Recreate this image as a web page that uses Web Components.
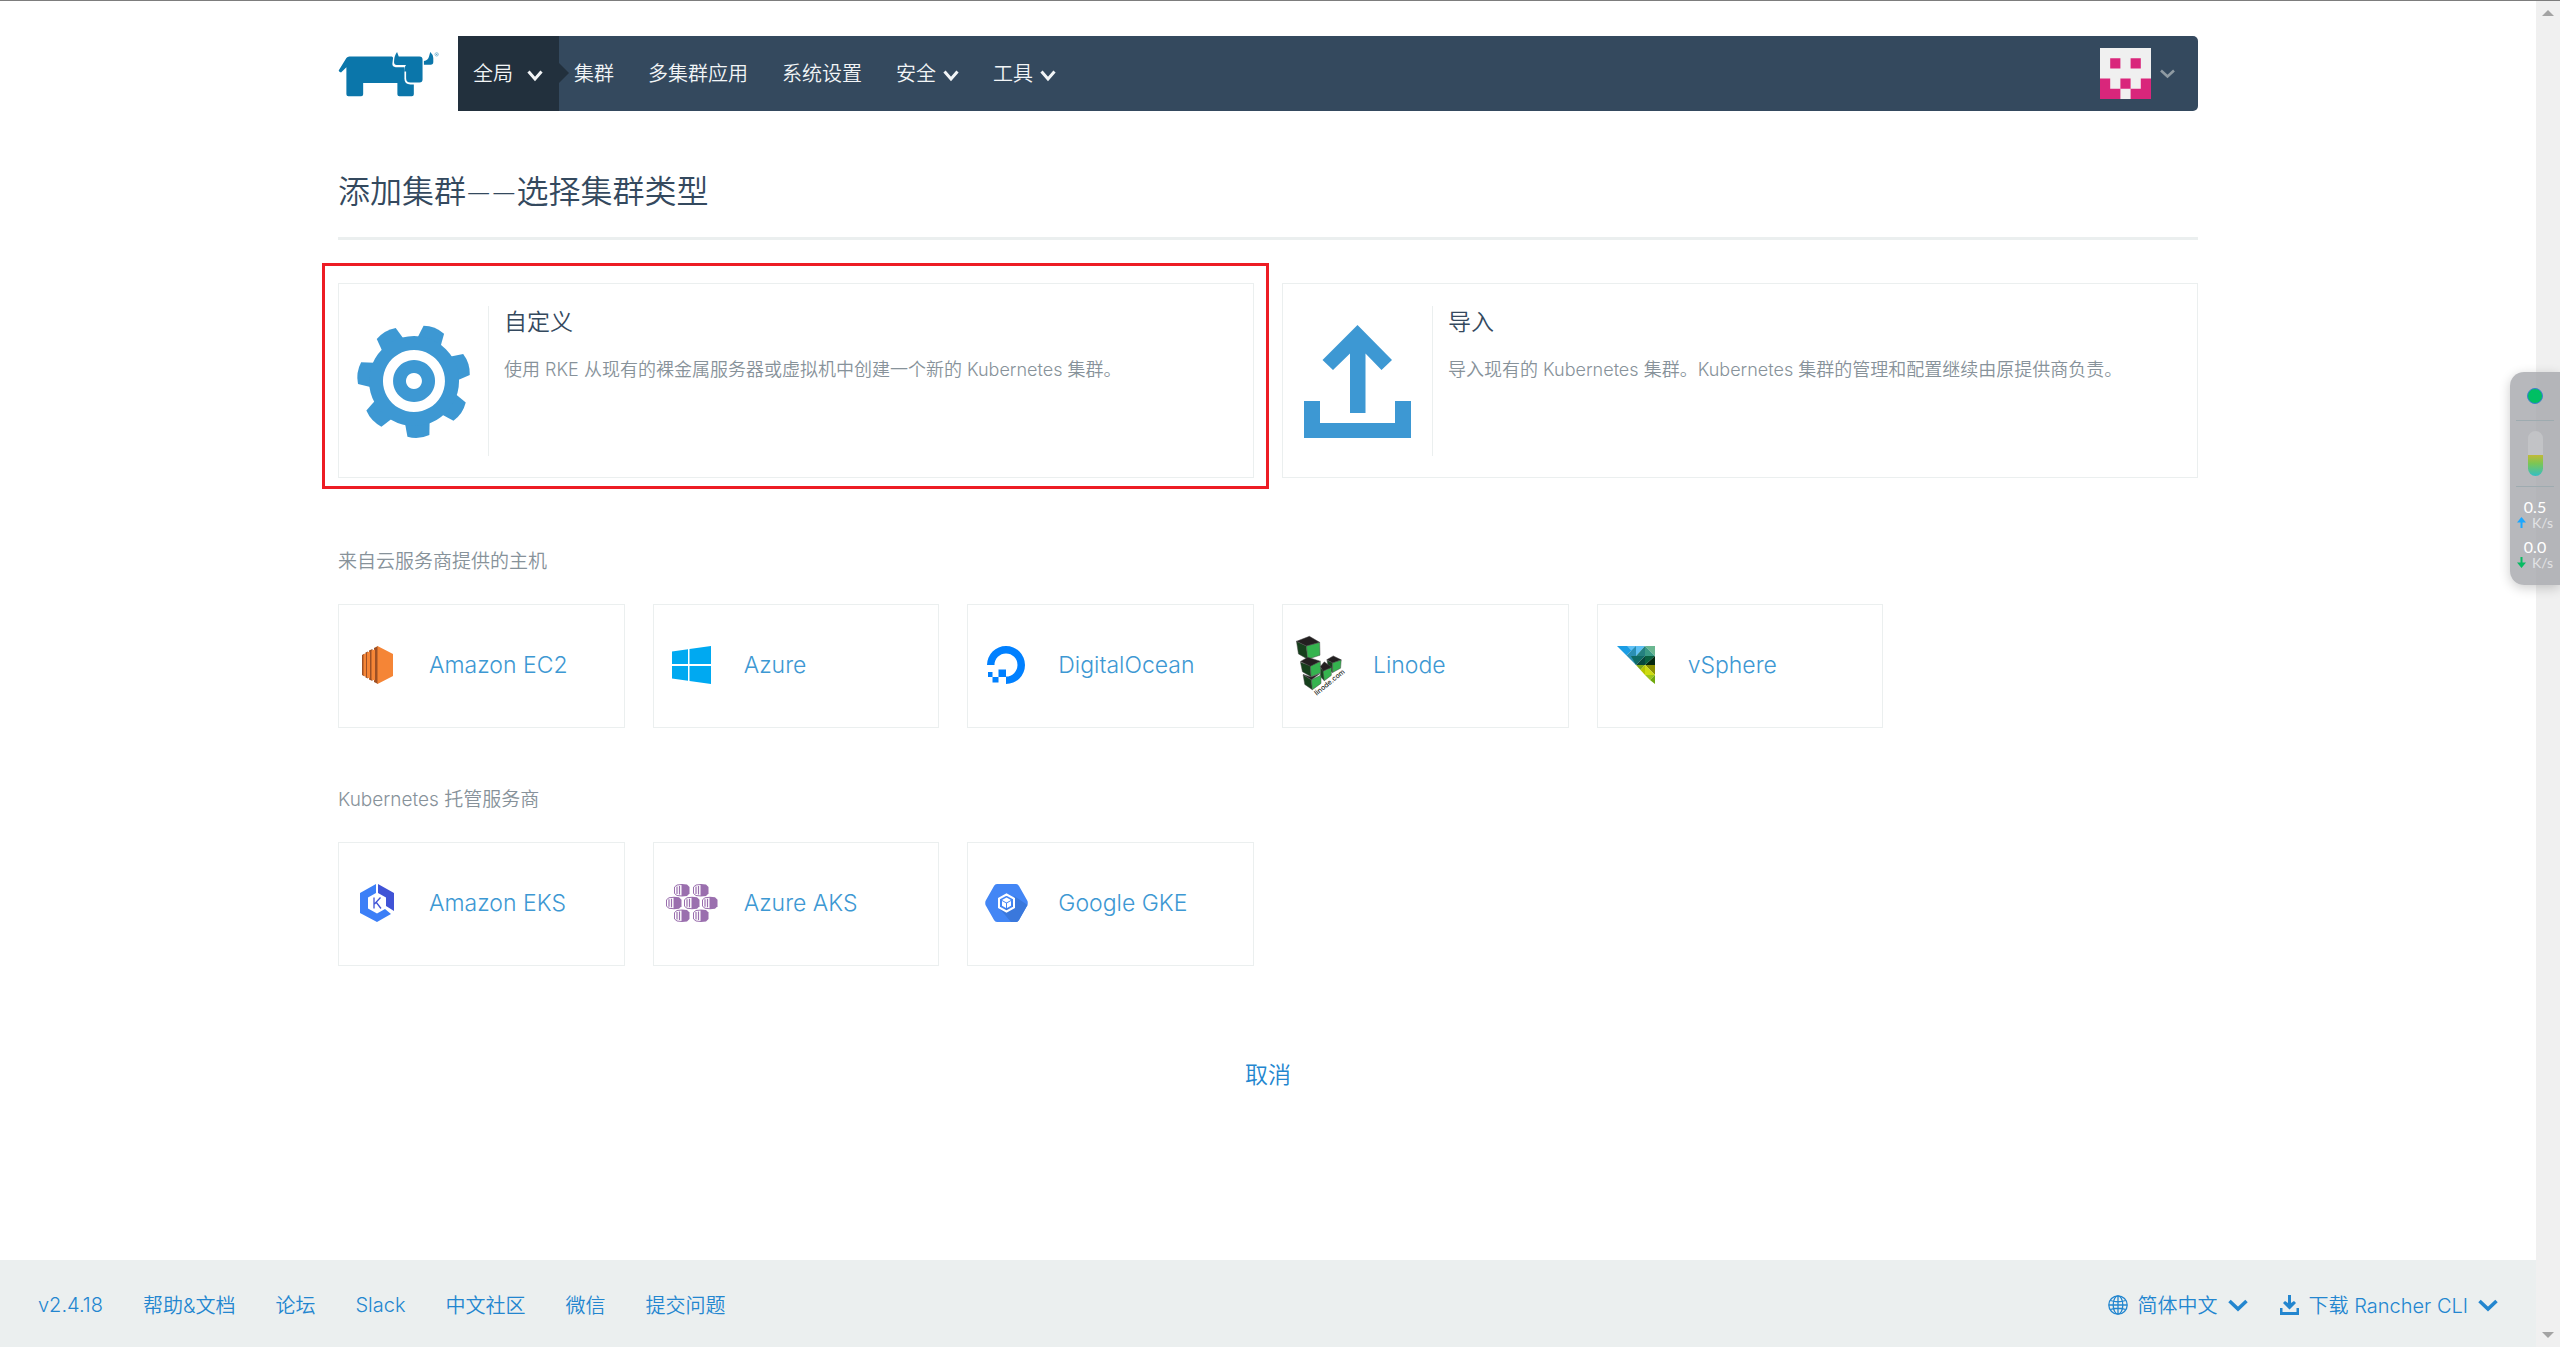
<!DOCTYPE html>
<html lang="zh-CN">
<head>
<meta charset="utf-8">
<title>Rancher</title>
<style>
  :root {
    --primary: #2386cf;
    --link: #3d98d3;
    --dark: #34495e;
    --darker: #22303d;
    --muted: #87929a;
    --line: #ebefef;
  }
  html, body {
    height: 100%;
    margin: 0;
  }
  body {
    background: #fff;
    color: var(--dark);
    font-family: Inter, "Noto Sans CJK SC", sans-serif;
    font-size: 20px;
    font-weight: 350;
  }
</style>
</head>
<body>
<rc-app></rc-app>
<script>
const teeth = [...Array(7).keys()].map(i => `<path transform="rotate(${(-4.6 + i * 360 / 7).toFixed(2)} 57 57)" d="M44 92 L46 112 Q57 116 68 112 L70 92Z"/>`).join('')

const aksCell = (x, y) => `
  <g transform="translate(${x} ${y})">
    <path fill="#9a6fae" d="M8 0 L13 .5 L15.500 3 V9.500 L13 12 L8 12.500Z"/>
    <path fill="#fff" stroke="#9a6fae" stroke-width="1" d="M8 .5 L3 1 L.5 3 V9.500 L3 11.500 L8 12Z"/>
    <path stroke="#9a6fae" stroke-width="1.200" d="M3 2.500 V10 M5.500 2 V10.500"/>
  </g>`

// name: [width, height, viewBox, markup]
const icons = {
  logo: [102, 47, '14 18 304 140', `
    <g fill="#0b76aa">
      <path d="M16 79 L39 42 Q42 37 48 37 H174 Q178 37 178 42 L176 60 Q176 69 186 69 H212 V104 Q212 121 230 121 H240 V150 Q240 156 234 156 H197 Q191 156 191 150 V116 H89 V150 Q89 156 83 156 H45 Q39 156 39 150 V69 L23 85 Q17 84 16 79Z"/>
      <path d="M190 24 L195 37 H257 Q266 37 266 46 V106 Q266 115 257 115 H230 Q217 115 217 102 V82 H211 Q213 66 217 63 H189 Q181 63 181 54 Q181 36 190 24Z"/>
      <path d="M289 24 Q298 32 298 42 V54 Q298 62 290 62 H270 V51 Q283 48 285 38Z"/>
    </g>
    <circle cx="308" cy="31" r="5" fill="none" stroke="#5aa3c7" stroke-width="2"/><circle cx="308" cy="31" r="2" fill="#5aa3c7"/>`],
  gear: [114, 114, '0 0 114 114', `
    <g fill="#3d98d3">${teeth}<path fill-rule="evenodd" d="M57 12 a45 45 0 1 0 .1 0Z M57 26 a31 31 0 1 1 -.1 0Z"/>
    <path fill-rule="evenodd" d="M57 36 a21 21 0 1 0 .1 0Z M57 49 a8 8 0 1 1 -.1 0Z"/></g>`],
  upload: [107, 113, '0 0 107 113', `
    <path fill="#3d98d3" d="M53.500 0 L88 35 L77.500 45 L61.500 28.500 V88 H46 V28.500 L29 45 L18.500 35Z M0 76 H16 V98 H91 V76 H107 V113 H0Z"/>`],
  avatar: [51, 51, '0 0 5 5', `
    <path fill="#f0f0f0" d="M0 0h5v5H0z"/>
    <path fill="#d9267b" d="M1 1h1v1H1z M3 1h1v1H3z M0 3h1v1h1v1H0z M2 3h1v1H2z M4 3h1v2H3v-1h1z"/>`],
  chevron: [20, 12, '0 0 20 12', `<path fill="none" stroke="currentColor" stroke-width="3.600" d="M1.500 2 L10 10 L18.500 2"/>`],
  caret: [16, 12, '0 0 16 12', `<path fill="none" stroke="currentColor" stroke-width="3" d="M1.500 1.500 L8 9 L14.500 1.500"/>`],
  thin: [15, 10, '0 0 15 10', `<path fill="none" stroke="currentColor" stroke-width="2.600" d="M1 1.500 L7.500 7.500 L14 1.500"/>`],
  globe: [20, 20, '0 0 20 20', `
    <g fill="none" stroke="currentColor" stroke-width="1.300">
      <circle cx="10" cy="10" r="9.200"/><ellipse cx="10" cy="10" rx="4.800" ry="9.200"/>
      <path d="M10 1v18 M1 10h18 M2.500 5.500 Q10 8 17.500 5.500 M2.500 14.500 Q10 12 17.500 14.500"/>
    </g>`],
  download: [19, 20, '0 0 19 20', `<path fill="currentColor" d="M8 0 H11 V8 L14 6 L16 8 L9.500 14.500 L3 8 L5 6 L8 8Z M0 13 H2.500 V17 H16.500 V13 H19 V20 H0Z"/>`],
  ec2: [31, 38, '0 0 31 38', `
    <path fill="#9d5025" d="M0 9 L2.500 7.500 V30.500 L0 29Z M3.500 6.500 L6 5.500 V32.500 L3.500 31.500Z M7 4.500 L10.500 3 V35 L7 33.500Z M12 2 L16 0 V38 L12 36Z"/>
    <path fill="#f58536" d="M15.500 0 L31 8 V30 L15.500 38Z M1.500 8.500 L4 7.500 V30.500 L1.500 29.500Z M5 6.500 L8 5.500 V32.500 L5 31.500Z M9.500 4.500 L13 3.500 V34.500 L9.500 33.500Z"/>`],
  azure: [39, 38, '0 0 39 38', `<path fill="#00a9f1" d="M0 5.500 L16 3.200 V18 H0Z M17.500 3 L39 0 V18 H17.500Z M0 20 H16 V34.800 L0 32.500Z M17.500 20 H39 V38 L17.500 35Z"/>`],
  digitalocean: [38, 38, '0 0 38 38', `
    <path fill="#0080ff" d="M19 38 V30.500 A11.500 11.500 0 1 0 7.500 19 H0 A19 19 0 1 1 19 38Z M11.500 23.500 H19 V31 H11.500Z M5.500 31 H11.500 V36.500 H5.500Z M1 26 H5.500 V31 H1Z"/>`],
  linode: [52, 63, '74 70 156 190', `
    <g stroke="#4a4a4a" stroke-width="1.500" stroke-linejoin="round">
      <path fill="#16401c" d="M78 92 L108 106 L112 146 L84 130Z M90 155 L120 166 L122 199 L96 184Z M98 193 L123 208 L126 238 L103 222Z M150 172 L162 182 L162 211 L150 198Z M170 149 L187 156 L187 186 L175 176Z"/>
      <path fill="#35b44f" d="M108 106 L148 95 L149 134 L112 146Z M120 166 L150 153 L151 187 L122 199Z M123 208 L152 194 L152 219 L126 238Z M158 182 L184 170 L183 195 L162 211Z M187 156 L213 148 L211 173 L187 186Z"/>
      <path fill="#231f20" d="M78 92 L117 77 L148 95 L108 106Z M90 153 L112 140 L150 152 L120 167Z M98 192 L122 200 L148 190 L123 208Z M150 168 L162 154 L184 170 L158 182Z M169 148 L189 136 L213 148 L187 157Z"/>
    </g>
    <text transform="translate(139 256) rotate(-39)" font-family="Inter" font-weight="500" font-size="21" fill="#231f20">linode.com</text>`],
  vsphere: [38, 38, '0 0 38 38', `
    <path fill="#1b9de4" d="M0 0 H19 L9.500 9.500Z"/><path fill="#5ec0f5" d="M10 0 H28 L19 10Z"/><path fill="#2b8fb3" d="M9.500 9.500 L19 0 V19Z"/>
    <path fill="#6ab791" d="M28 0 H38 V10Z"/><path fill="#3a9a85" d="M28 0 V10 H38Z"/><path fill="#24807f" d="M19 10 L28 0 V10Z"/>
    <path fill="#0f6b66" d="M14 10 H28 L19 19Z"/><path fill="#07473c" d="M19 19 L28 10 V19Z"/><path fill="#0a6040" d="M28 10 H38 L28 19Z"/><path fill="#04280f" d="M38 10 V19 H28Z"/>
    <path fill="#7fa815" d="M19 19 H28 L23.500 24Z"/><path fill="#b5c400" d="M28 19 V29 L23.500 24Z"/><path fill="#8a8f00" d="M28 19 H38 V29Z"/><path fill="#cddb11" d="M28 19 L38 29 H28Z"/>
    <path fill="#9cc51a" d="M28 29 H38 L33 34Z"/><path fill="#6fa80c" d="M38 29 V38 L33 34Z"/>`],
  eks: [34, 38, '0 0 34 38', `
    <path fill="#3c7ff7" d="M0 9 L16 0 V9 L8 13.500 V24.500 L17 29.500 L25 25 L31 30 L17 38 L0 29Z"/>
    <path fill="#4053d6" d="M18 0 L34 9 V27 L26 22 V13.500 L18 9Z"/>
    <path fill="none" stroke="#4053d6" stroke-width="1.300" d="M14 13.500 V24.500 M20.500 13.500 L14.500 20 M16 18 L21 24.500"/>`],
  aks: [52, 38, '0 0 52 38', aksCell(8, 0) + aksCell(27, 0) + aksCell(0, 12.75) + aksCell(18, 12.75) + aksCell(36, 12.75) + aksCell(8, 25.5) + aksCell(27, 25.5)],
  gke: [43, 38, '0 0 43 38', `
    <path fill="#4386f5" d="M12 0 H31 Q33 0 34 2 L42.500 17 Q43 19 42.500 21 L34 36 Q33 38 31 38 H12 Q10 38 9 36 L.5 21 Q0 19 .5 17 L9 2 Q10 0 12 0Z"/>
    <path fill="#3a78dc" d="M29 12 L42.500 21 L34 36 Q33 38 31 38 H26 L15 25 L27 24Z"/>
    <path fill="none" stroke="#fff" stroke-width="2" d="M21.500 10.500 L29 14.500 V23.500 L21.500 27.500 L14 23.500 V14.500Z"/>
    <path fill="#fff" d="M21.500 13.500 L26 16 L21.500 18.500 L17 16Z M17 17 L21 19.200 V24 L17 21.800Z M26 17 L22 19.200 V24 L26 21.800Z"/>`],
  'arrow-up': [9, 11, '0 0 9 11', `<path fill="#1ba7ff" d="M4.500 0 L9 5.500 H5.500 V11 H3.500 V5.500 H0Z"/>`],
  'arrow-down': [9, 11, '0 0 9 11', `<path fill="#07bb62" d="M4.500 11 L9 5.500 H5.500 V0 H3.500 V5.500 H0Z"/>`]
}

class Base extends HTMLElement {
  constructor() {
    super()
    this.attachShadow({mode: 'open'})
    this.shadowRoot.innerHTML = this.template
  }
}

customElements.define('rc-icon', class extends HTMLElement {
  constructor() {
    super()
    this.attachShadow({mode: 'open'})
  }

  connectedCallback() {
    const [width, height, box, markup] = icons[this.getAttribute('name')]
    this.shadowRoot.innerHTML = `
    <style>
      :host { display: inline-flex; flex: none; }
      svg { display: block; overflow: visible; }
    </style>
    <svg width="${width}" height="${height}" viewBox="${box}" aria-hidden="true">${markup}</svg>`
  }
})

customElements.define('rc-nav-item', class extends Base {
  get template() {
    return `
    <style>
      :host { display: flex; }
      button {
        display: flex;
        align-items: center;
        gap: 7px;
        padding: 0 19px 2px 15px;
        border: 0;
        background: none;
        color: #f2f5f7;
        font: inherit;
        cursor: pointer;
      }
      :host([active]) button {
        position: relative;
        gap: 14px;
        padding-right: 16px;
        background: var(--darker);
      }
      :host([active]) button::after {
        content: '';
        position: absolute;
        left: 100%;
        border: 10px solid transparent;
        border-left-color: var(--darker);
        border-right: 0;
      }
      ::slotted(rc-icon) { margin-top: 6px; }
    </style>
    <button type="button"><slot></slot></button>`
  }
})

customElements.define('rc-header', class extends Base {
  get template() {
    return `
    <style>
      :host { display: flex; align-items: stretch; height: 75px; }
      .logo { display: flex; align-items: center; width: 120px; }
      nav {
        display: flex;
        flex: 1;
        background: var(--dark);
        border-radius: 0 5px 5px 0;
      }
      .user {
        display: flex;
        align-items: center;
        gap: 9px;
        margin-left: auto;
        padding: 0 23px;
        border: 0;
        background: none;
        color: #8f9ba3;
      }
    </style>
    <a class="logo" href="#" aria-label="Rancher"><rc-icon name="logo"></rc-icon></a>
    <nav>
      <slot></slot>
      <button class="user" type="button" aria-label="User"><rc-icon name="avatar"></rc-icon><rc-icon name="thin"></rc-icon></button>
    </nav>`
  }
})

customElements.define('rc-choice', class extends Base {
  get template() {
    return `
    <style>
      :host { display: block; position: relative; }
      :host([marked])::before {
        content: '';
        position: absolute;
        inset: -20px -15px -11px -16px;
        border: 3px solid #ed1c24;
        pointer-events: none;
      }
      a {
        display: flex;
        box-sizing: border-box;
        height: 195px;
        padding: 22px 15px 21px 0;
        border: 1px solid var(--line);
        color: inherit;
        text-decoration: none;
      }
      .icon {
        display: flex;
        flex: none;
        align-items: center;
        justify-content: center;
        width: 149px;
        border-right: 1px solid var(--line);
      }
      .text { padding: 0 15px; }
      h2 {
        margin: 0 0 17px;
        font-size: 23px;
        font-weight: inherit;
        line-height: 32px;
      }
      p {
        margin: 0;
        color: var(--muted);
        font-size: 18px;
        line-height: 30px;
      }
    </style>
    <a href="#">
      <span class="icon"><slot name="icon"></slot></span>
      <div class="text">
        <h2><slot name="title"></slot></h2>
        <p><slot></slot></p>
      </div>
    </a>`
  }
})

customElements.define('rc-group', class extends Base {
  get template() {
    return `
    <style>
      :host { display: block; }
      h3 {
        margin: 0 0 27px;
        color: var(--muted);
        font-size: 19px;
        font-weight: inherit;
        line-height: 30px;
      }
      .grid {
        display: grid;
        grid-template-columns: repeat(6, 1fr);
        gap: 28px;
      }
    </style>
    <h3><slot name="label"></slot></h3>
    <div class="grid"><slot></slot></div>`
  }
})

customElements.define('rc-driver', class extends Base {
  get template() {
    return `
    <style>
      :host { display: block; }
      a {
        display: flex;
        align-items: center;
        box-sizing: border-box;
        height: 124px;
        padding-bottom: 2px;
        border: 1px solid var(--line);
        color: var(--link);
        font-size: 23px;
        font-weight: 300;
        text-decoration: none;
      }
      .icon {
        display: flex;
        justify-content: center;
        width: 76px;
        margin-right: 14px;
      }
    </style>
    <a href="#"><span class="icon"><slot name="icon"></slot></span><slot></slot></a>`
  }
})

customElements.define('rc-footer', class extends Base {
  get template() {
    return `
    <style>
      :host {
        display: flex;
        align-items: center;
        justify-content: space-between;
        box-sizing: border-box;
        height: 87px;
        padding: 2px 38px 0;
        background: #ebefef;
        color: var(--primary);
      }
      div { display: flex; align-items: center; gap: 40px; }
      .tools { gap: 32px; }
      a { color: inherit; text-decoration: none; }
      button {
        display: flex;
        align-items: center;
        gap: 10px;
        padding: 0;
        border: 0;
        background: none;
        color: inherit;
        font: inherit;
      }
    </style>
    <div>
      <a href="#">v2.4.18</a>
      <a href="#">帮助&amp;文档</a>
      <a href="#">论坛</a>
      <a href="#">Slack</a>
      <a href="#">中文社区</a>
      <a href="#">微信</a>
      <a href="#">提交问题</a>
    </div>
    <div class="tools">
      <button type="button"><rc-icon name="globe"></rc-icon>简体中文<rc-icon name="chevron"></rc-icon></button>
      <button type="button"><rc-icon name="download"></rc-icon>下载 Rancher CLI<rc-icon name="chevron"></rc-icon></button>
    </div>`
  }
})

customElements.define('rc-scrollbar', class extends Base {
  get template() {
    return `
    <style>
      :host {
        display: flex;
        flex: none;
        flex-direction: column;
        align-items: center;
        justify-content: space-between;
        box-sizing: border-box;
        width: 24px;
        padding: 9px 0;
        background: #f0f0f0;
      }
      i { border: 6px solid transparent; }
      .up { border-bottom-color: #a3a3a3; border-top: 0; }
      .down { border-top-color: #a3a3a3; border-bottom: 0; }
    </style>
    <i class="up"></i><i class="down"></i>`
  }
})

customElements.define('net-meter', class extends Base {
  get template() {
    return `
    <style>
      :host {
        position: absolute;
        top: 372px;
        right: 0;
        display: flex;
        flex-direction: column;
        align-items: center;
        box-sizing: border-box;
        width: 50px;
        height: 213px;
        padding-top: 16px;
        background: rgba(163, 164, 169, .78);
        border-radius: 14px 0 0 14px;
        box-shadow: 0 3px 12px rgba(0, 0, 0, .2);
        color: #fff;
        font: 16px/20px Lato, sans-serif;
      }
      .dot {
        box-sizing: border-box;
        width: 16px;
        height: 16px;
        border: 1px solid #3d7fd0;
        border-radius: 50%;
        background: #00bf63;
      }
      hr {
        width: 38px;
        margin: 16px 0 10px;
        border: 0;
        border-top: 1px solid #9eabb0;
      }
      .level {
        width: 15px;
        height: 45px;
        margin-bottom: -6px;
        border-radius: 8px;
        background: linear-gradient(#c2c3c6 53%, #c2b936 53%, #7cc654 72%, #32bfc4);
      }
      span {
        display: flex;
        align-items: center;
        gap: 6px;
        margin-bottom: 9px;
        color: #e2e3e5;
        font-size: 14px;
        line-height: 10px;
      }
      b { font-weight: 400; }
    </style>
    <div class="dot"></div>
    <hr>
    <div class="level"></div>
    <hr>
    <b>0.5</b>
    <span><rc-icon name="arrow-up"></rc-icon>K/s</span>
    <b>0.0</b>
    <span><rc-icon name="arrow-down"></rc-icon>K/s</span>`
  }
})

customElements.define('rc-app', class extends Base {
  get template() {
    return `
    <style>
      :host {
        display: flex;
        box-sizing: border-box;
        min-height: 100vh;
        border-top: 1px solid #7d7d7d;
      }
      .page {
        display: flex;
        flex: 1;
        flex-direction: column;
      }
      main {
        flex: 1;
        box-sizing: border-box;
        width: 100%;
        max-width: 1860px;
        margin: 0 auto;
        padding-top: 35px;
      }
      h1 {
        margin: 54px 0 43px;
        padding-bottom: 20px;
        border-bottom: 3px solid var(--line);
        font-family: Lato, "Noto Sans CJK SC", sans-serif;
        font-size: 32px;
        font-weight: inherit;
        line-height: 52px;
      }
      .choices {
        display: grid;
        grid-template-columns: 1fr 1fr;
        gap: 28px;
        margin-bottom: 69px;
      }
      rc-group { margin-bottom: 57px; }
      .cancel {
        display: block;
        margin: 93px auto 0;
        padding: 0;
        border: 0;
        background: none;
        color: var(--primary);
        font: inherit;
        font-size: 23px;
        line-height: 32px;
      }
    </style>
    <div class="page">
      <main>
        <rc-header>
          <rc-nav-item active>全局<rc-icon name="caret"></rc-icon></rc-nav-item>
          <rc-nav-item>集群</rc-nav-item>
          <rc-nav-item>多集群应用</rc-nav-item>
          <rc-nav-item>系统设置</rc-nav-item>
          <rc-nav-item>安全<rc-icon name="caret"></rc-icon></rc-nav-item>
          <rc-nav-item>工具<rc-icon name="caret"></rc-icon></rc-nav-item>
        </rc-header>
        <h1>添加集群——选择集群类型</h1>
        <div class="choices">
          <rc-choice marked>
            <rc-icon slot="icon" name="gear"></rc-icon>
            <span slot="title">自定义</span>使用 RKE 从现有的裸金属服务器或虚拟机中创建一个新的 Kubernetes 集群。
          </rc-choice>
          <rc-choice>
            <rc-icon slot="icon" name="upload"></rc-icon>
            <span slot="title">导入</span>导入现有的 Kubernetes 集群。Kubernetes 集群的管理和配置继续由原提供商负责。
          </rc-choice>
        </div>
        <rc-group>
          <span slot="label">来自云服务商提供的主机</span>
          <rc-driver><rc-icon slot="icon" name="ec2"></rc-icon>Amazon EC2</rc-driver>
          <rc-driver><rc-icon slot="icon" name="azure"></rc-icon>Azure</rc-driver>
          <rc-driver><rc-icon slot="icon" name="digitalocean"></rc-icon>DigitalOcean</rc-driver>
          <rc-driver><rc-icon slot="icon" name="linode"></rc-icon>Linode</rc-driver>
          <rc-driver><rc-icon slot="icon" name="vsphere"></rc-icon>vSphere</rc-driver>
        </rc-group>
        <rc-group>
          <span slot="label">Kubernetes 托管服务商</span>
          <rc-driver><rc-icon slot="icon" name="eks"></rc-icon>Amazon EKS</rc-driver>
          <rc-driver><rc-icon slot="icon" name="aks"></rc-icon>Azure AKS</rc-driver>
          <rc-driver><rc-icon slot="icon" name="gke"></rc-icon>Google GKE</rc-driver>
        </rc-group>
        <button class="cancel" type="button">取消</button>
      </main>
      <rc-footer></rc-footer>
    </div>
    <rc-scrollbar></rc-scrollbar>
    <net-meter></net-meter>`
  }
})
</script>
</body>
</html>
